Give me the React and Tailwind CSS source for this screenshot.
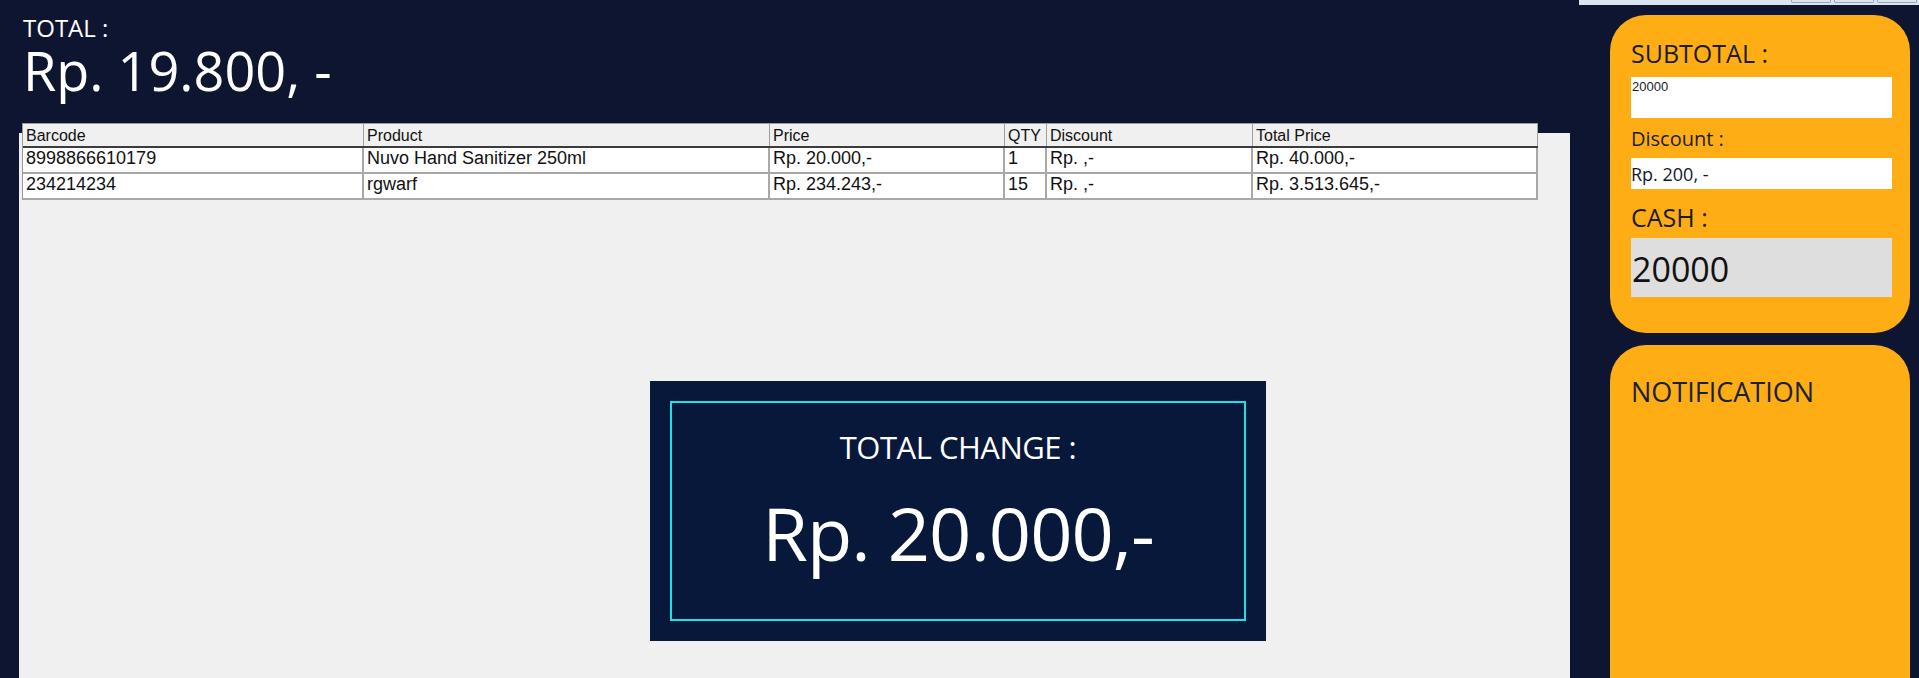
import React from "react";

const columns = [
  { label: "Barcode", w: "w-[341px]" },
  { label: "Product", w: "w-[406px]" },
  { label: "Price", w: "w-[235px]" },
  { label: "QTY", w: "w-[42px]" },
  { label: "Discount", w: "w-[206px]" },
  { label: "Total Price", w: "w-[285px]" },
];

const rows = [
  ["8998866610179", "Nuvo Hand Sanitizer 250ml", "Rp. 20.000,-", "1", "Rp. ,-", "Rp. 40.000,-"],
  ["234214234", "rgwarf", "Rp. 234.243,-", "15", "Rp. ,-", "Rp. 3.513.645,-"],
];

const sans = { fontFamily: '"Open Sans", "Noto Sans", sans-serif' };
const arial = { fontFamily: '"Liberation Sans", Arial, sans-serif' };

function CartTable() {
  return (
    <div className="-mt-[10px] ml-[3px] w-[1516px] border-t border-l border-[#9a9a9a] bg-white" style={arial}>
      <div className="flex bg-[#f0f0f0] border-b-[2px] border-[#3c3c3c]">
        {columns.map((c) => (
          <div
            key={c.label}
            className={`${c.w} h-[22px] shrink-0 border-r border-[#a0a0a0] pl-[3px] pt-[3px] text-[16px] leading-[18px] text-[#111] whitespace-nowrap overflow-hidden`}
          >
            {c.label}
          </div>
        ))}
      </div>
      {rows.map((r, i) => (
        <div key={i} className="flex border-b-[2px] border-[#a8a8a8]">
          {r.map((cell, j) => (
            <div
              key={j}
              className={`${columns[j].w} h-[24px] shrink-0 border-r-[2px] border-[#a8a8a8] pl-[3px] text-[18px] leading-[20px] text-[#111] whitespace-nowrap overflow-hidden`}
            >
              {cell}
            </div>
          ))}
        </div>
      ))}
    </div>
  );
}

function ChangeBox() {
  return (
    <div className="mt-[181px] ml-[631px] w-[616px] h-[260px] bg-[#07183a] p-[20px]">
      <div className="h-full border-2 border-[#19e3e6] flex flex-col items-center pt-[29px]" style={sans}>
        <div className="text-[31px] leading-none tracking-[-0.5px] text-white">TOTAL CHANGE :</div>
        <div className="mt-[33px] text-[74px] leading-none tracking-[-1px] text-white">Rp. 20.000,-</div>
      </div>
    </div>
  );
}

function SummaryCard() {
  return (
    <div className="h-[318px] rounded-[36px] bg-[#feae14] pl-[21px] pr-[18px] pt-[26px] flex flex-col" style={sans}>
      <div className="text-[25px] leading-none text-[#1b1b22]">SUBTOTAL :</div>
      <div className="mt-[11px] h-[41px] bg-white pl-[1px] pt-[2px] text-[13px] leading-[15px] text-[#222]" style={arial}>
        20000
      </div>
      <div className="mt-[11px] text-[20px] leading-none text-[#1b1b22]">Discount :</div>
      <div className="mt-[9px] h-[31px] bg-white flex items-center text-[18px] leading-none text-[#14182c]">
        Rp. 200, -
      </div>
      <div className="mt-[16px] text-[25px] leading-none text-[#1b1b22]">CASH :</div>
      <div className="mt-[8px] h-[59px] bg-[#dedede] flex items-center pl-[1px] pt-[3px] text-[34px] leading-none text-[#111]">
        20000
      </div>
    </div>
  );
}

function NotificationCard() {
  return (
    <div className="flex-1 rounded-t-[36px] bg-[#feae14] pl-[21px] pt-[33px]" style={sans}>
      <div className="text-[27px] leading-none text-[#1c1f38]">NOTIFICATION</div>
    </div>
  );
}

export default function App() {
  return (
    <div className="relative w-[1919px] h-[678px] overflow-hidden bg-[#0e1530] flex">
      {/* window frame sliver with caption buttons */}
      <div className="absolute top-0 right-0 w-[340px] h-[5px] bg-[#dce5ef] flex justify-end gap-[3px] pr-[2px]">
        <div className="w-[40px] h-[3px] border-b border-x border-[#9aa6b4] rounded-b-[2px]" />
        <div className="w-[40px] h-[3px] border-b border-x border-[#9aa6b4] rounded-b-[2px]" />
        <div className="w-[40px] h-[3px] border-b border-x border-[#9aa6b4] rounded-b-[2px]" />
      </div>

      <div className="w-[1570px] shrink-0 flex flex-col pl-[19px]">
        <div className="pl-[4px] pt-[16px] text-white" style={sans}>
          <div className="text-[24px] leading-[24px]">TOTAL :</div>
          <div className="mt-[6px] text-[54px] leading-[48px]">Rp. 19.800, -</div>
        </div>
        <div className="mt-[39px] flex-1 bg-[#f0f0f0] flex flex-col">
          <CartTable />
          <ChangeBox />
        </div>
      </div>

      <div className="ml-[40px] w-[300px] shrink-0 flex flex-col pt-[15px] gap-[12px]">
        <SummaryCard />
        <NotificationCard />
      </div>
    </div>
  );
}
